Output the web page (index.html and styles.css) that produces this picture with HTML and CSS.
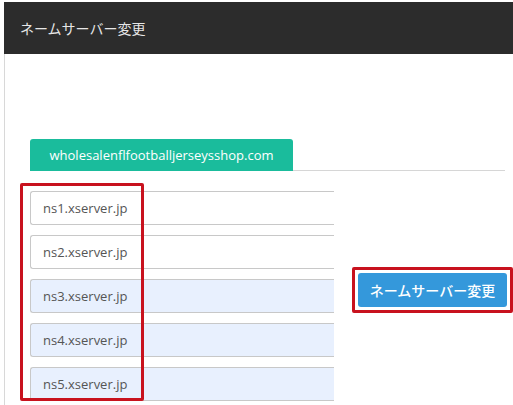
FILE: index.html
```html
<!DOCTYPE html>
<html lang="ja">
<head>
<meta charset="utf-8">
<title>ネームサーバー変更</title>
<link rel="stylesheet" href="styles.css">
</head>
<body>
<div class="panel">
  <div class="panel-head">ネームサーバー変更</div>
  <div class="panel-body">
    <div class="tabs">
      <div class="tab">wholesalenflfootballjerseysshop.com</div>
    </div>
    <div class="row">
      <div class="inputs">
        <input class="ns" type="text" value="ns1.xserver.jp">
        <input class="ns" type="text" value="ns2.xserver.jp">
        <input class="ns filled" type="text" value="ns3.xserver.jp">
        <input class="ns filled" type="text" value="ns4.xserver.jp">
        <input class="ns filled" type="text" value="ns5.xserver.jp">
        <div class="mark mark-inputs"></div>
      </div>
      <div class="btn-mark">
        <button class="btn" type="button">ネームサーバー変更</button>
      </div>
    </div>
  </div>
</div>
</body>
</html>
```

FILE: styles.css
```css
html, body {
  margin: 0;
  padding: 0;
  background: #fff;
}
body {
  padding-top: 2px;
  font-family: "Open Sans", "Noto Sans CJK JP", sans-serif;
  height: 403px;
  overflow: hidden;
}
.panel {
  margin-left: 4px;
}
.panel-head {
  height: 52px;
  background: #2c2c2c;
  color: #e6e6e6;
  font-size: 14px;
  font-family: "Noto Sans CJK JP", sans-serif;
  display: flex;
  align-items: center;
  padding-left: 16px;
}
.panel-body {
  border-left: 1px solid #d8d8d8;
  padding: 85px 8px 4px 25px;
}
.tabs {
  display: flex;
  border-bottom: 1px solid #d6d6d6;
  height: 31px;
}
.tab {
  width: 263px;
  height: 32px;
  background: #1abc9c;
  color: #fff;
  border-radius: 3px 3px 0 0;
  font-size: 13px;
  display: flex;
  align-items: center;
  justify-content: center;
  box-sizing: border-box;
}
.row {
  display: flex;
  align-items: flex-start;
  margin-top: 20px;
}
.inputs {
  position: relative;
  display: flex;
  flex-direction: column;
  gap: 10px;
  width: 304px;
  flex: none;
}
.ns {
  width: 100%;
  height: 34px;
  box-sizing: border-box;
  border: 1px solid #c8c8c8;
  border-right: none;
  border-radius: 3px 0 0 3px;
  padding: 0 0 0 12px;
  margin: 0;
  font-family: "Open Sans", sans-serif;
  font-size: 13px;
  color: #555;
  background: #fff;
  outline: none;
}
.ns.filled {
  background: #e8f0fe;
}
.mark {
  position: absolute;
  border: 3px solid #c8121e;
  border-radius: 2px;
  box-sizing: border-box;
  pointer-events: none;
}
.mark-inputs {
  left: -10px;
  top: -8px;
  width: 124px;
  height: 218px;
}
.btn-mark {
  margin-left: 18px;
  margin-top: 76px;
  border: 3px solid #c8121e;
  padding: 3px;
  border-radius: 2px;
}
.btn {
  display: block;
  width: 149px;
  height: 34px;
  background: #3498db;
  color: #fff;
  border: none;
  border-radius: 3px;
  font-family: "Noto Sans CJK JP", sans-serif;
  font-size: 14px;
  font-weight: 500;
  padding: 0;
}
```
